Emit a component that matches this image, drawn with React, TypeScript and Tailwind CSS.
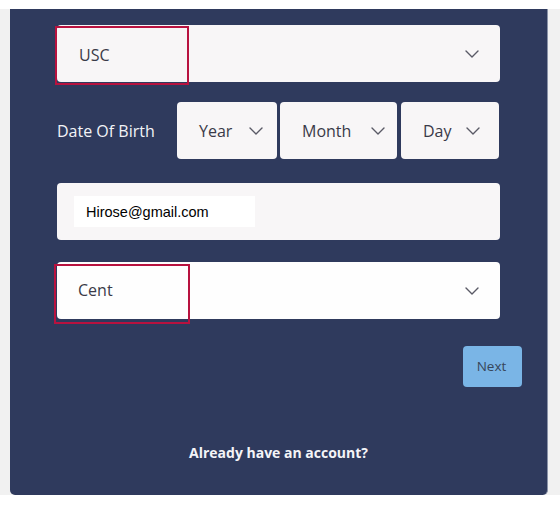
import { ChevronDown } from "lucide-react";

const font = { fontFamily: '"Open Sans", "Noto Sans", sans-serif' };

function Chevron() {
  return <ChevronDown size={24} strokeWidth={1.4} className="shrink-0 text-[#5a5a66]" />;
}

function DateSelect({ label, width, pr }: { label: string; width: string; pr: string }) {
  return (
    <div
      className={`flex h-[57px] ${width} ${pr} items-center justify-between rounded-[4px] bg-[#f8f6f7] pl-[22px] text-[16px] text-[#3a3a48]`}
    >
      <span>{label}</span>
      <Chevron />
    </div>
  );
}

function MarkedSelect({ value, bg, box }: { value: string; bg: string; box: string }) {
  return (
    <div className={`relative flex h-[57px] items-center justify-end rounded-[4px] ${bg} pr-[16px]`}>
      <Chevron />
      <div
        className={`absolute ${box} flex items-center border-2 border-[#b8123f] pl-[22px] text-[16px] text-[#3a3a48]`}
      >
        {value}
      </div>
    </div>
  );
}

export default function App() {
  return (
    <div className="h-[505px] w-[560px] bg-white pt-[9px]" style={font}>
      <div className="flex h-[486px] bg-[#f1f1f1] pl-[10px] pr-[12px]">
        <div className="flex w-[538px] flex-col rounded-b-[5px] border-r border-[#8a93a8] bg-[#2f3a5d] pl-[47px] pr-[47px] pt-[16px]">
          <MarkedSelect
            value="USC"
            bg="bg-[#f8f6f7]"
            box="left-[-2px] top-[1px] h-[59px] w-[134px] pb-[2px]"
          />

          <div className="mt-[20px] flex items-center">
            <span className="w-[120px] text-[16px] text-[#f2f3f7]">Date Of Birth</span>
            <DateSelect label="Year" width="w-[100px]" pr="pr-[9px]" />
            <div className="w-[3px]" />
            <DateSelect label="Month" width="w-[117px]" pr="pr-[7px]" />
            <div className="w-[4px]" />
            <DateSelect label="Day" width="w-[98px]" pr="pr-[14px]" />
          </div>

          <div className="mt-[24px] flex h-[57px] items-center rounded-[4px] bg-[#f8f6f7] pl-[17px]">
            <div
              className="flex h-[31px] w-[181px] items-center bg-white pl-[12px] pt-[3px] text-[14.5px] text-black"
              style={{ fontFamily: '"Liberation Sans", Arial, sans-serif' }}
            >
              Hirose@gmail.com
            </div>
          </div>

          <div className="mt-[22px]">
            <MarkedSelect
              value="Cent"
              bg="bg-[#fefefe]"
              box="left-[-3px] top-[2px] h-[60px] w-[136px] pb-[8px]"
            />
          </div>

          <div className="mr-[-22px] mt-[27px] flex justify-end">
            <button className="h-[41px] w-[59px] rounded-[4px] bg-[#7ab5e6] pr-[2px] text-[13.5px] text-[#37465a]">
              Next
            </button>
          </div>

          <p className="mt-[55px] text-center text-[14px] font-bold text-[#f4f4f8]">
            Already have an account?
          </p>
        </div>
      </div>
    </div>
  );
}
